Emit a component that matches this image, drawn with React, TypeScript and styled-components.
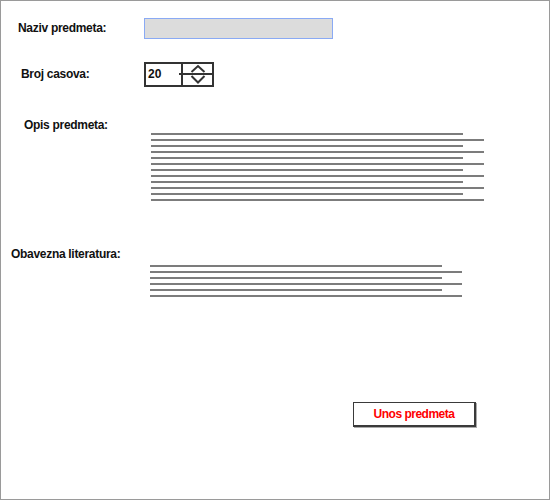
import React from 'react';
import styled, { createGlobalStyle } from 'styled-components';

const GlobalStyle = createGlobalStyle`
  html, body {
    margin: 0;
    padding: 0;
    background: #ffffff;
  }
  body {
    font-family: "Liberation Sans", Arial, sans-serif;
  }
`;

const Frame = styled.div`
  box-sizing: border-box;
  width: 550px;
  height: 500px;
  border: 1px solid #9a9a9a;
  background: #fff;
  display: flex;
  flex-direction: column;
`;

const Row = styled.div<{ $top: number; $align?: string }>`
  display: grid;
  grid-template-columns: 143px 1fr;
  align-items: ${(p) => p.$align || 'start'};
  margin-top: ${(p) => p.$top}px;
`;

const Label = styled.div<{ $indent: number }>`
  padding-left: ${(p) => p.$indent}px;
  font-size: 12px;
  line-height: 15px;
  font-weight: bold;
  letter-spacing: -0.3px;
  color: #111;
  white-space: nowrap;
`;

const TextField = styled.div`
  box-sizing: border-box;
  width: 189px;
  height: 21px;
  background: #dcdcdc;
  border: 1px solid #8aaaf4;
`;

const Spinner = styled.div`
  box-sizing: border-box;
  width: 70px;
  height: 25px;
  border: 2px solid #333;
  display: flex;
  position: relative;
`;

const SpinValue = styled.div`
  box-sizing: border-box;
  width: 37px;
  padding-left: 2px;
  border-right: 2px solid #333;
  font-size: 12px;
  font-weight: bold;
  line-height: 21px;
  color: #111;
`;

const SpinArrows = styled.div`
  flex: 1;
  display: flex;
  align-items: center;
  justify-content: center;
`;

const SpinDivider = styled.div`
  position: absolute;
  left: 33px;
  right: -2px;
  top: 9px;
  height: 2px;
  background: #333;
`;

const Lines = styled.div<{ $pad: number; $left: number }>`
  display: flex;
  flex-direction: column;
  gap: 4px;
  padding-top: ${(p) => p.$pad}px;
  padding-left: ${(p) => p.$left}px;
`;

const Line = styled.div<{ $width: number }>`
  width: ${(p) => p.$width}px;
  height: 2px;
  background: #7c7c7c;
`;

const ButtonRow = styled.div`
  display: flex;
  padding-left: 352px;
  margin-top: 105px;
`;

const Button = styled.button`
  box-sizing: border-box;
  width: 123px;
  height: 25px;
  background: #fff;
  border: 1px solid #3a3a3a;
  border-right-width: 2px;
  border-bottom-width: 2px;
  box-shadow: 1px 1px 0 #aaa;
  color: #ff0000;
  font-family: "Liberation Sans", Arial, sans-serif;
  font-size: 12px;
  font-weight: bold;
  letter-spacing: -0.5px;
  padding: 0;
  cursor: pointer;
`;

const Chevrons = () => (
  <svg width="26" height="21" viewBox="0 0 26 21">
    <polyline points="6.5,8 13,2 19.5,8" fill="none" stroke="#333" strokeWidth="2" />
    <polyline points="6.5,12 13,18.5 19.5,12" fill="none" stroke="#333" strokeWidth="2" />
  </svg>
);

const opisLines = Array.from({ length: 12 }, (_, i) => (i % 2 === 0 ? 312 : 333));
const literaturaLines = Array.from({ length: 6 }, (_, i) => (i % 2 === 0 ? 292 : 312));

const App = () => {
  return (
    <>
      <GlobalStyle />
      <Frame>
        <Row $top={17} $align="center">
          <Label $indent={17}>Naziv predmeta:</Label>
          <TextField />
        </Row>
        <Row $top={23} $align="center">
          <Label $indent={20}>Broj casova:</Label>
          <Spinner>
            <SpinValue>20</SpinValue>
            <SpinArrows>
              <Chevrons />
            </SpinArrows>
            <SpinDivider />
          </Spinner>
        </Row>
        <Row $top={31}>
          <Label $indent={23}>Opis predmeta:</Label>
          <Lines $pad={15} $left={7}>
            {opisLines.map((w, i) => (
              <Line key={i} $width={w} />
            ))}
          </Lines>
        </Row>
        <Row $top={46}>
          <Label $indent={10}>Obavezna literatura:</Label>
          <Lines $pad={18} $left={6}>
            {literaturaLines.map((w, i) => (
              <Line key={i} $width={w} />
            ))}
          </Lines>
        </Row>
        <ButtonRow>
          <Button>Unos predmeta</Button>
        </ButtonRow>
      </Frame>
    </>
  );
};

export default App;
